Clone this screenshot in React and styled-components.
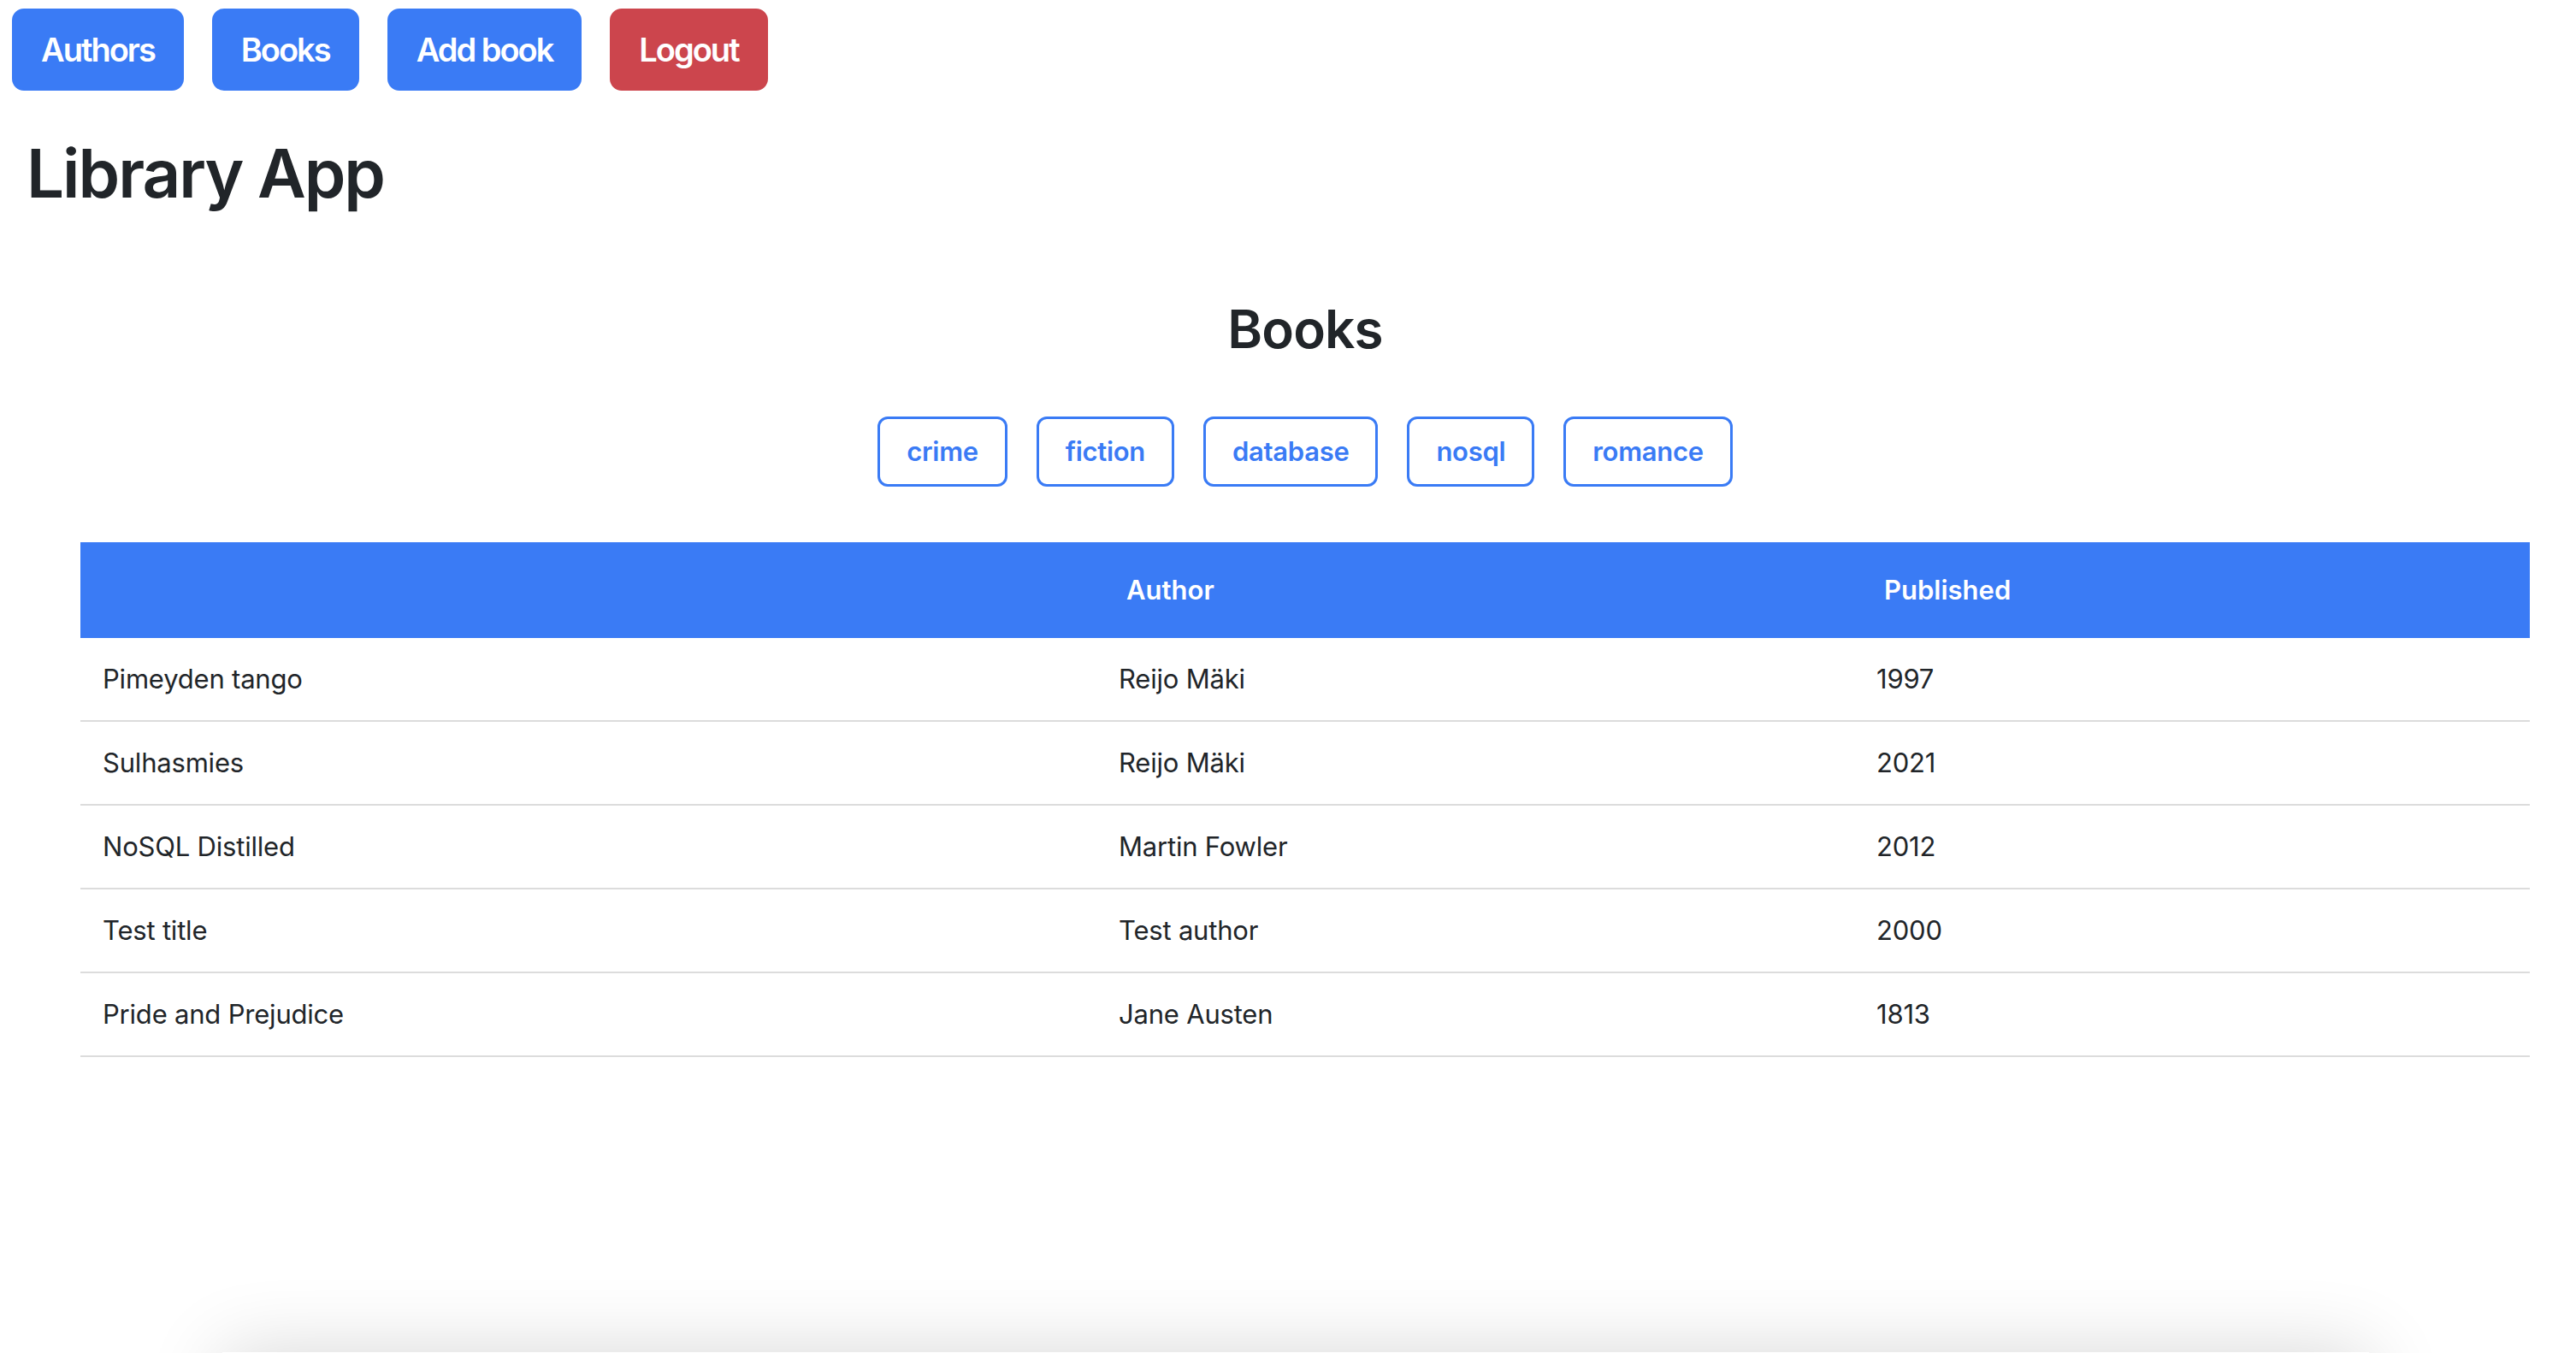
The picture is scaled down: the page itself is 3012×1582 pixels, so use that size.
import React from 'react';
import styled, {createGlobalStyle} from 'styled-components';

const GlobalStyle = createGlobalStyle`
  html, body {
    margin: 0;
    padding: 0;
    background: #ffffff;
    overflow: hidden;
  }

  body {
    font-family: Inter, "Noto Sans", "Liberation Sans", sans-serif;
    color: #212529;
  }

  * {
    box-sizing: border-box;
  }
`;

const StyledPage = styled.div`
  display: flex;
  flex-direction: column;
  width: 100%;
`;

const StyledNav = styled.nav`
  display: flex;
  gap: 33px;
  padding: 10px 0 0 14px;
`;

const NavButton = styled.button`
  padding: 16px 32px;
  border: 2px solid ${({$danger}) => ($danger ? '#cc454d' : '#3a7bf5')};
  border-radius: 14px;

  // 색상 지정
  background: ${({$danger}) => ($danger ? '#cc454d' : '#3a7bf5')};
  color: #ffffff;

  font-family: inherit;
  font-size: 38px;
  font-weight: 600;
  line-height: 60px;
  letter-spacing: -2px;
  cursor: pointer;
`;

const Title = styled.h1`
  margin: 49px 0 0 31px;
  font-size: 78px;
  font-weight: 600;
  line-height: 96px;
  letter-spacing: -2px;
`;

const BooksSection = styled.section`
  display: flex;
  flex-direction: column;
  align-items: center;
  padding: 0 54px 0 94px;
`;

const SectionTitle = styled.h2`
  margin: 95px 0 0;
  font-size: 62px;
  font-weight: 600;
  line-height: 77px;
  letter-spacing: -0.8px;
`;

const GenreList = styled.div`
  display: flex;
  gap: 34px;
  margin-top: 64px;
`;

const GenreButton = styled.button`
  padding: 14px 31px;
  border: 3px solid #3a7bf5;
  border-radius: 12px;

  background: #ffffff;
  color: #3a7bf5;

  font-family: inherit;
  font-size: 31px;
  font-weight: 600;
  line-height: 48px;
  letter-spacing: -0.3px;
  cursor: pointer;
`;

const Table = styled.table`
  width: 100%;
  margin-top: 65px;
  border-collapse: collapse;
  table-layout: fixed;
  font-size: 31px;
  line-height: 48px;
`;

const HeadCell = styled.th`
  width: ${({$width}) => $width}px;
  padding: 32px 35px;
  background: #3a7bf5;
  color: #ffffff;
  font-weight: 600;
  text-align: left;
`;

const Row = styled.tr`
  border-bottom: 2px solid #dcdcdc;
`;

const Cell = styled.td`
  padding: 24px 26px;
  color: #212529;
  letter-spacing: -0.2px;
`;

const ShadowFooter = styled.div`
  width: 2510px;
  height: 200px;
  margin: 345px 0 0 260px;
  background: #ffffff;
  box-shadow: 0 0 90px rgba(0, 0, 0, 0.16);
`;

const navItems = [
  {id: 'authors', title: 'Authors'},
  {id: 'books', title: 'Books'},
  {id: 'add', title: 'Add book'},
  {id: 'logout', title: 'Logout', danger: true},
];

const genres = ['crime', 'fiction', 'database', 'nosql', 'romance'];

const books = [
  {title: 'Pimeyden tango', author: 'Reijo Mäki', published: 1997},
  {title: 'Sulhasmies', author: 'Reijo Mäki', published: 2021},
  {title: 'NoSQL Distilled', author: 'Martin Fowler', published: 2012},
  {title: 'Test title', author: 'Test author', published: 2000},
  {title: 'Pride and Prejudice', author: 'Jane Austen', published: 1813},
];

const App = () => {
  return (
    <StyledPage>
      <GlobalStyle />
      <StyledNav>
        {navItems.map(item => (
          <NavButton key={item.id} $danger={item.danger}>
            {item.title}
          </NavButton>
        ))}
      </StyledNav>
      <Title>Library App</Title>
      <BooksSection>
        <SectionTitle>Books</SectionTitle>
        <GenreList>
          {genres.map(genre => (
            <GenreButton key={genre}>{genre}</GenreButton>
          ))}
        </GenreList>
        <Table>
          <thead>
            <tr>
              <HeadCell $width={1188}></HeadCell>
              <HeadCell $width={886}>Author</HeadCell>
              <HeadCell $width={790}>Published</HeadCell>
            </tr>
          </thead>
          <tbody>
            {books.map(book => (
              <Row key={book.title}>
                <Cell>{book.title}</Cell>
                <Cell>{book.author}</Cell>
                <Cell>{book.published}</Cell>
              </Row>
            ))}
          </tbody>
        </Table>
      </BooksSection>
      <ShadowFooter />
    </StyledPage>
  );
};

export default App;
